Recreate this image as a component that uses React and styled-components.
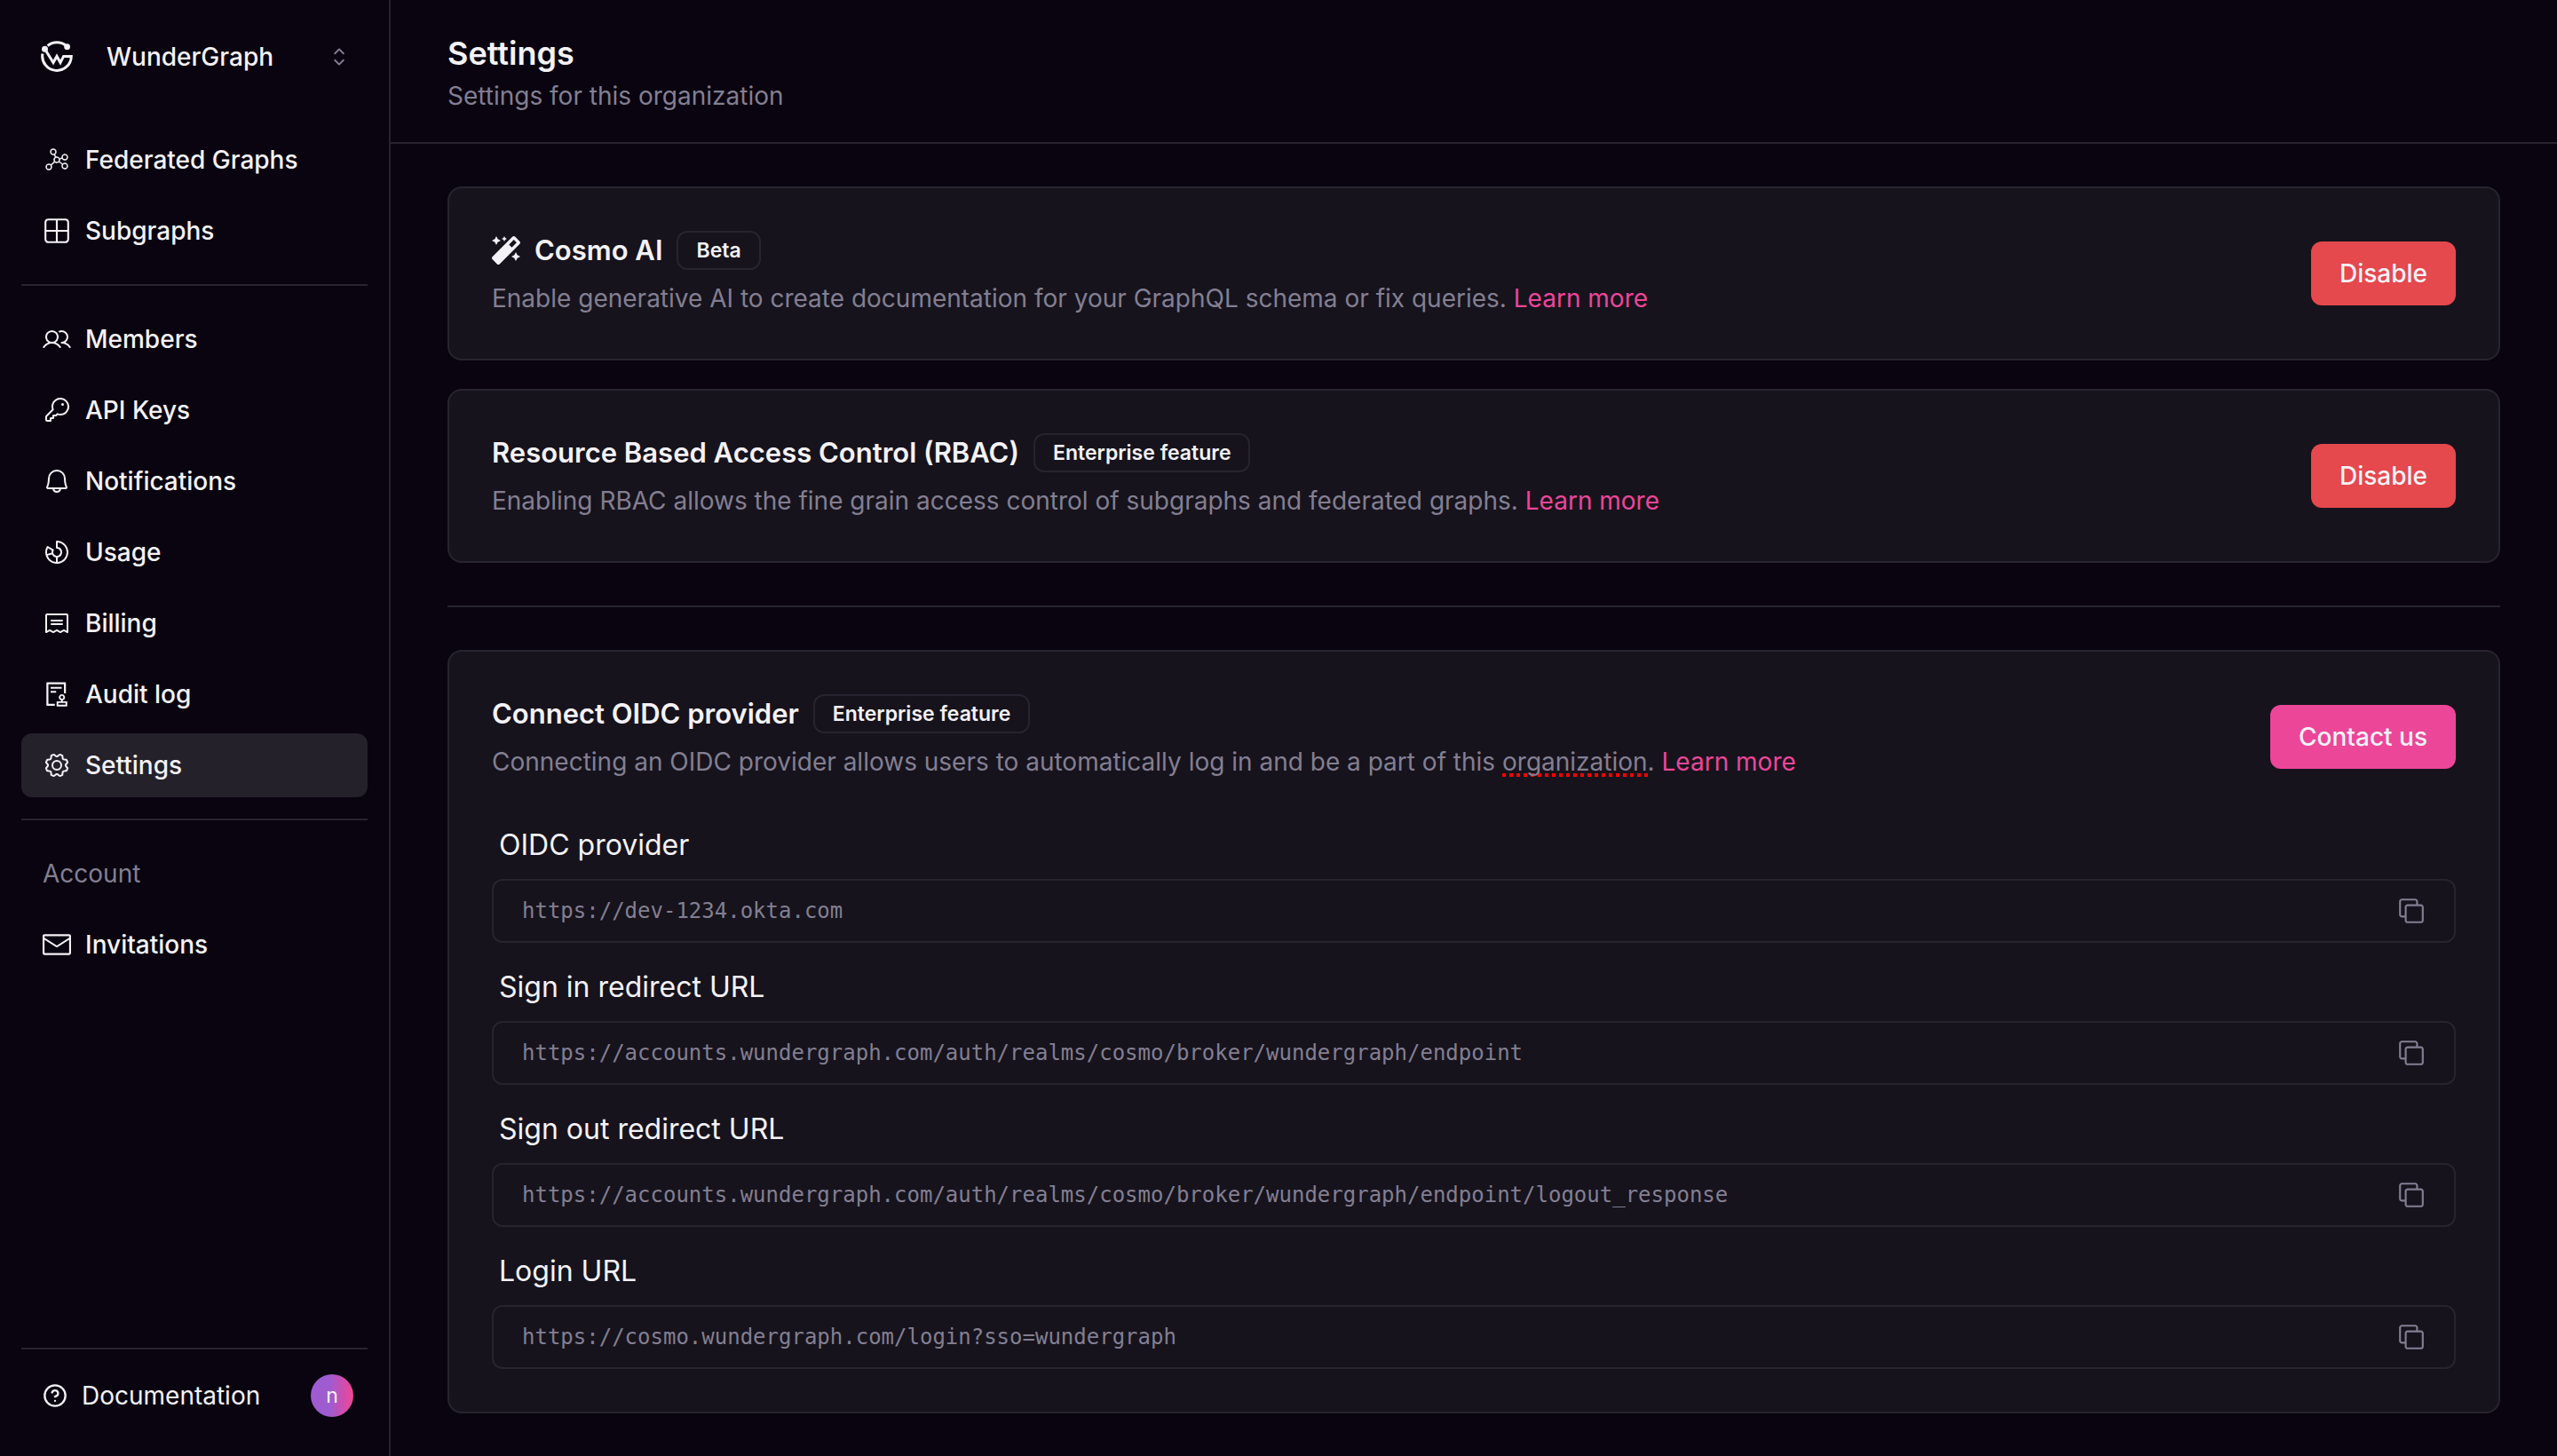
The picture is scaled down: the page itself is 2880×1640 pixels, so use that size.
import { useState } from 'react';
import styled, { createGlobalStyle } from 'styled-components';
import { HelpCircle } from 'lucide-react';
import { RxCaretSort, RxComponent2, RxCopy, RxEnvelopeClosed } from 'react-icons/rx';
import { PiBell, PiChartDonut, PiGear, PiGraphLight, PiKey, PiReceipt, PiUsers } from 'react-icons/pi';
import { AiOutlineAudit } from 'react-icons/ai';
import { FaMagic } from 'react-icons/fa';

const GlobalStyle = createGlobalStyle`
  :root {
    --bg-color: #09040f;
    --card-color: #16131c;
    --active-color: #24212b;
    --border-color: #272430;
    --text-color: #f4f2f7;
    --muted-color: #837f92;
    --pink-color: #ec4699;
    --red-color: #e5484d;
  }

  * {
    box-sizing: border-box;
  }

  body {
    margin: 0;
    background: var(--bg-color);
    color: var(--text-color);
    font-family: Inter, 'Liberation Sans', sans-serif;
    font-size: 28px;
    line-height: 40px;
  }

  button, input {
    font: inherit;
    color: inherit;
  }

  a {
    color: inherit;
    text-decoration: none;
  }

  svg {
    display: block;
    flex-shrink: 0;
  }
`;

const Layout = styled.div`
  display: flex;
  align-items: flex-start;
  min-height: 100vh;
`;

const Sidebar = styled.aside`
  position: sticky;
  top: 0;
  display: flex;
  flex-direction: column;
  flex: 0 0 440px;
  height: 100vh;
  padding: 24px;
  border-right: 2px solid var(--border-color);
`;

const OrgSwitcher = styled.button`
  display: flex;
  align-items: center;
  gap: 32px;
  height: 80px;
  margin-bottom: 40px;
  padding: 0 16px;
  border: 0;
  background: none;
  font-weight: 500;
  text-align: left;
  cursor: pointer;

  span {
    flex: 1;
  }
`;

const LogoBox = styled.i`
  display: flex;
  align-items: center;
  justify-content: center;
  width: 48px;
  height: 48px;
`;

const SortIcon = styled(RxCaretSort)`
  color: var(--muted-color);
`;

const NavList = styled.ul`
  display: flex;
  flex-direction: column;
  gap: 8px;
  margin: 0;
  padding: 0;
  list-style-type: none;
`;

const NavLink = styled.a`
  display: flex;
  align-items: center;
  gap: 16px;
  height: 72px;
  padding: 0 24px;
  border-radius: 12px;
  font-weight: 500;

  &.active {
    background: var(--active-color);
  }
`;

const NavTitle = styled.h2`
  margin: 0 0 8px;
  padding: 16px 24px;
  color: var(--muted-color);
  font-size: 28px;
  font-weight: 400;
`;

const Separator = styled.hr`
  width: 100%;
  height: 2px;
  margin: ${({ $space }) => $space}px 0;
  border: 0;
  background: var(--border-color);
`;

const SidebarFooter = styled.footer`
  display: flex;
  align-items: center;
  justify-content: space-between;
  margin-top: auto;
  padding: 28px 16px 20px 24px;
  border-top: 2px solid var(--border-color);
`;

const DocsLink = styled.a`
  display: flex;
  align-items: center;
  gap: 16px;
`;

const Avatar = styled.button`
  width: 48px;
  height: 48px;
  padding: 0;
  border: 0;
  border-radius: 50%;
  background: linear-gradient(to right, #9f5bd0 45%, #ec4699 95%);
  font-size: 23px;
  line-height: 48px;
  cursor: pointer;
`;

const Main = styled.main`
  flex: 1;
  min-width: 0;
`;

const PageHeader = styled.header`
  padding: 32px 64px;
  border-bottom: 2px solid var(--border-color);

  h1 {
    margin: 0;
    font-size: 36px;
    font-weight: 600;
    line-height: 56px;
  }

  p {
    margin: 0;
    color: var(--muted-color);
  }
`;

const Content = styled.div`
  padding: 48px 64px;
`;

const CardStack = styled.div`
  display: grid;
  gap: 32px;
`;

const Card = styled.section`
  padding: 48px;
  border: 2px solid var(--border-color);
  border-radius: 16px;
  background: var(--card-color);
`;

const CardHeader = styled.div`
  display: flex;
  align-items: center;
  justify-content: space-between;
  gap: 32px;
`;

const CardTitle = styled.h2`
  display: flex;
  align-items: center;
  gap: 16px;
  margin: 0 0 12px;
  font-size: 31px;
  font-weight: 600;
  line-height: 44px;
`;

const Badge = styled.span`
  padding: 0 20px;
  border: 2px solid var(--border-color);
  border-radius: 12px;
  font-size: 23px;
  line-height: 40px;
`;

const Description = styled.p`
  margin: 0;
  color: var(--muted-color);
`;

/* square dots, as a spell checker draws them */
const Misspelled = styled.span`
  background: repeating-linear-gradient(to right, #ff0000 0 4px, transparent 4px 8px) left bottom / 100% 4px no-repeat;
`;

const LearnMore = styled.a`
  color: var(--pink-color);
`;

const Button = styled.button`
  flex-shrink: 0;
  height: 72px;
  padding: 0 32px;
  border: 0;
  border-radius: 12px;
  background: ${({ $danger }) => ($danger ? 'var(--red-color)' : 'var(--pink-color)')};
  font-weight: 500;
  cursor: pointer;
`;

const Fields = styled.div`
  display: grid;
  gap: 32px;
  margin-top: 56px;
`;

const FieldLabel = styled.label`
  display: block;
  margin-bottom: 20px;
  padding-left: 8px;
  font-size: 32px;
  line-height: 36px;
`;

const FieldBox = styled.div`
  display: flex;
  align-items: center;
  height: 72px;
  padding: 0 32px;
  border: 2px solid var(--border-color);
  border-radius: 12px;
  color: var(--muted-color);

  input {
    flex: 1;
    min-width: 0;
    padding: 0;
    border: 0;
    outline: 0;
    background: none;
    font-family: 'DejaVu Sans Mono', monospace;
    font-size: 24px;
    line-height: 32px;
  }

  button {
    padding: 0;
    border: 0;
    background: none;
    cursor: pointer;
  }
`;

const Logo = () => (
  <svg width="36" height="36" viewBox="0 0 36 36" fill="none" stroke="currentColor" strokeWidth="3">
    <path d="M7.6 5.6A16.3 16.3 0 0 1 28.6 5.6" />
    <path d="M4.5 9.3L14 24.6L18 17.4L22 24.6L25.6 17.4H34.3A16.3 16.3 0 1 1 1.9 14.6" />
    <circle cx="4.5" cy="9.3" r="3.5" fill="currentColor" stroke="none" />
    <circle cx="29.6" cy="6.7" r="3.4" fill="currentColor" stroke="none" />
  </svg>
);

const graphLinks = [
  { label: 'Federated Graphs', icon: PiGraphLight },
  { label: 'Subgraphs', icon: RxComponent2 },
];

const orgLinks = [
  { label: 'Members', icon: PiUsers },
  { label: 'API Keys', icon: PiKey },
  { label: 'Notifications', icon: PiBell },
  { label: 'Usage', icon: PiChartDonut },
  { label: 'Billing', icon: PiReceipt },
  { label: 'Audit log', icon: AiOutlineAudit },
  { label: 'Settings', icon: PiGear },
];

const accountLinks = [{ label: 'Invitations', icon: RxEnvelopeClosed }];

const fields = [
  { id: 'oidc-provider', label: 'OIDC provider', value: 'https://dev-1234.okta.com' },
  { id: 'sign-in-url', label: 'Sign in redirect URL', value: 'https://accounts.wundergraph.com/auth/realms/cosmo/broker/wundergraph/endpoint' },
  { id: 'sign-out-url', label: 'Sign out redirect URL', value: 'https://accounts.wundergraph.com/auth/realms/cosmo/broker/wundergraph/endpoint/logout_response' },
  { id: 'login-url', label: 'Login URL', value: 'https://cosmo.wundergraph.com/login?sso=wundergraph' },
];

const NavLinks = ({ links, activeItem, onSelect }) => (
  <NavList>
    {links.map(({ label, icon: Icon }) => (
      <li key={label}>
        <NavLink
          href="#"
          onClick={() => onSelect(label)}
          className={activeItem === label ? 'active' : ''}
        >
          <Icon size={32} />
          {label}
        </NavLink>
      </li>
    ))}
  </NavList>
);

const CopyField = ({ id, label, value }) => (
  <div>
    <FieldLabel htmlFor={id}>{label}</FieldLabel>
    <FieldBox>
      <input id={id} type="text" value={value} readOnly />
      <button type="button" aria-label={`Copy ${label}`} onClick={() => navigator.clipboard?.writeText(value)}>
        <RxCopy size={32} />
      </button>
    </FieldBox>
  </div>
);

const App = () => {
  const [activeItem, setActiveItem] = useState('Settings');

  return (
    <>
      <GlobalStyle />
      <Layout>
        <Sidebar>
          <OrgSwitcher type="button">
            <LogoBox><Logo /></LogoBox>
            <span>WunderGraph</span>
            <SortIcon size={32} />
          </OrgSwitcher>
          <nav>
            <NavLinks links={graphLinks} activeItem={activeItem} onSelect={setActiveItem} />
            <Separator $space={24} />
            <NavLinks links={orgLinks} activeItem={activeItem} onSelect={setActiveItem} />
            <Separator $space={24} />
            <NavTitle>Account</NavTitle>
            <NavLinks links={accountLinks} activeItem={activeItem} onSelect={setActiveItem} />
          </nav>
          <SidebarFooter>
            <DocsLink href="#">
              <HelpCircle size={28} />
              Documentation
            </DocsLink>
            <Avatar type="button">n</Avatar>
          </SidebarFooter>
        </Sidebar>

        <Main>
          <PageHeader>
            <h1>Settings</h1>
            <p>Settings for this organization</p>
          </PageHeader>
          <Content>
            <CardStack>
              <Card>
                <CardHeader>
                  <div>
                    <CardTitle>
                      <FaMagic size={32} />
                      Cosmo AI
                      <Badge>Beta</Badge>
                    </CardTitle>
                    <Description>
                      Enable generative AI to create documentation for your GraphQL schema or fix queries.{' '}
                      <LearnMore href="#">Learn more</LearnMore>
                    </Description>
                  </div>
                  <Button type="button" $danger>Disable</Button>
                </CardHeader>
              </Card>
              <Card>
                <CardHeader>
                  <div>
                    <CardTitle>
                      Resource Based Access Control (RBAC)
                      <Badge>Enterprise feature</Badge>
                    </CardTitle>
                    <Description>
                      Enabling RBAC allows the fine grain access control of subgraphs and federated graphs.{' '}
                      <LearnMore href="#">Learn more</LearnMore>
                    </Description>
                  </div>
                  <Button type="button" $danger>Disable</Button>
                </CardHeader>
              </Card>
            </CardStack>
            <Separator $space={48} />
            <Card>
              <CardHeader>
                <div>
                  <CardTitle>
                    Connect OIDC provider
                    <Badge>Enterprise feature</Badge>
                  </CardTitle>
                  <Description>
                    Connecting an OIDC provider allows users to automatically log in and be a part of this{' '}
                    <Misspelled>organization</Misspelled>.{' '}
                    <LearnMore href="#">Learn more</LearnMore>
                  </Description>
                </div>
                <Button type="button">Contact us</Button>
              </CardHeader>
              <Fields>
                {fields.map((field) => (
                  <CopyField key={field.id} {...field} />
                ))}
              </Fields>
            </Card>
          </Content>
        </Main>
      </Layout>
    </>
  );
};

export default App;
